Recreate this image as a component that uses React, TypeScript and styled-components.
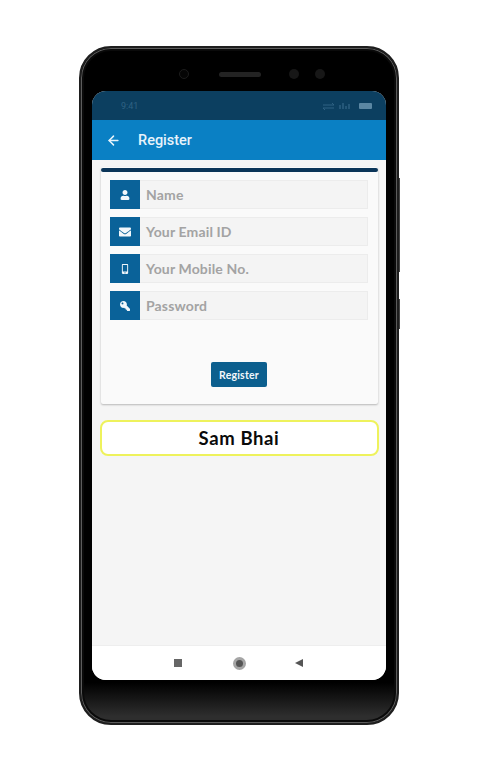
import React from "react";
import styled, { createGlobalStyle } from "styled-components";
import { ArrowLeft } from "lucide-react";
import { FaUser, FaEnvelope, FaMobileAlt, FaKey } from "react-icons/fa";

const GlobalStyle = createGlobalStyle`
  html, body {
    margin: 0;
    padding: 0;
    background: #ffffff;
    font-family: "Lato", "Liberation Sans", sans-serif;
  }
`;

const fields = [
  { label: "Name", icon: <FaUser size={10} /> },
  { label: "Your Email ID", icon: <FaEnvelope size={12} /> },
  { label: "Your Mobile No.", icon: <FaMobileAlt size={10} /> },
  { label: "Password", icon: <FlippedKey size={10} /> },
];

function FlippedKey({ size }: { size: number }) {
  return <FaKey size={size} style={{ transform: "scaleX(-1)" }} />;
}

export default function App() {
  return (
    <Page>
      <GlobalStyle />
      <Phone>
        <VolumeKey />
        <PowerKey />
        <Notch>
          <Camera />
          <Speaker />
          <Sensor />
          <Sensor $last />
        </Notch>
        <Screen>
          <StatusBar>
            <StatusText>9:41</StatusText>
            <StatusIcons>
              <svg width="49" height="8" viewBox="0 0 49 8">
                <path d="M0 3h11M11 3l-2-2M0 6h11M0 6l2 2" stroke="#2f6283" strokeWidth="1" fill="none" />
                <path d="M17 7V3M20 7V1M23 7V4M26 7V2" stroke="#2f6283" strokeWidth="1.4" />
                <rect x="36" y="1" width="13" height="6" rx="1" fill="#5b87a3" />
              </svg>
            </StatusIcons>
          </StatusBar>
          <AppBar>
            <ArrowLeft size={15} strokeWidth={2.4} color="#e6f3fb" />
            <Title>Register</Title>
          </AppBar>
          <Content>
            <Card>
              <CardAccent />
              <Fields>
                {fields.map((field) => (
                  <Field key={field.label}>
                    <IconBox>{field.icon}</IconBox>
                    <FieldLabel>{field.label}</FieldLabel>
                  </Field>
                ))}
              </Fields>
              <RegisterButton>Register</RegisterButton>
            </Card>
            <NameBox>Sam Bhai</NameBox>
          </Content>
          <NavBar>
            <NavSquare />
            <NavCircle />
            <NavBack />
          </NavBar>
        </Screen>
      </Phone>
    </Page>
  );
}

const Page = styled.div`
  width: 480px;
  height: 771px;
  box-sizing: border-box;
  padding: 46px 0 0 79px;
  overflow: hidden;
`;
const Phone = styled.div`
  position: relative;
  width: 320px;
  height: 679px;
  box-sizing: border-box;
  padding: 0 11px;
  background: linear-gradient(#000000 94%, #2e2e2e 99%);
  border: 2px solid #1e1e1e;
  border-radius: 32px;
  box-shadow: inset 0 0 0 1px #5c5c5c, inset 0 0 0 3px #0a0a0a;
`;
const VolumeKey = styled.div`
  position: absolute;
  top: 130px;
  right: -3px;
  width: 1px;
  height: 94px;
  background: #444444;
`;
const PowerKey = styled.div`
  position: absolute;
  top: 251px;
  right: -3px;
  width: 1px;
  height: 30px;
  background: #444444;
`;
const Notch = styled.div`
  display: flex;
  align-items: center;
  height: 43px;
  box-sizing: border-box;
  padding: 9px 0 0 87px;
`;
const Camera = styled.div`
  width: 10px;
  height: 10px;
  border-radius: 50%;
  background: #050505;
  border: 1px solid #1c1c1c;
  box-sizing: border-box;
  margin-right: 30px;
`;
const Speaker = styled.div`
  width: 42px;
  height: 5px;
  border-radius: 3px;
  background: #232323;
  margin-right: 28px;
`;
const Sensor = styled.div<{ $last?: boolean }>`
  width: 10px;
  height: 10px;
  border-radius: 50%;
  background: #171717;
  margin-right: ${(p) => (p.$last ? 0 : "16px")};
`;
const Screen = styled.div`
  display: flex;
  flex-direction: column;
  width: 294px;
  height: 589px;
  border-radius: 14px;
  overflow: hidden;
  background: #f5f5f5;
`;
const StatusBar = styled.div`
  display: flex;
  align-items: center;
  justify-content: space-between;
  height: 29px;
  flex-shrink: 0;
  box-sizing: border-box;
  padding: 0 14px 0 29px;
  background: #0c3f60;
`;
const StatusText = styled.span`
  color: #2f6283;
  font-size: 9px;
  font-family: "Roboto", sans-serif;
`;
const StatusIcons = styled.div`
  display: flex;
  align-items: center;
`;
const AppBar = styled.div`
  display: flex;
  align-items: center;
  height: 40px;
  flex-shrink: 0;
  box-sizing: border-box;
  padding: 0 0 0 14px;
  background: #0a80c4;
`;
const Title = styled.div`
  margin-left: 17px;
  color: #e6f3fb;
  font-family: "Roboto", sans-serif;
  font-size: 14.5px;
  font-weight: 500;
`;
const Content = styled.div`
  flex: 1;
  display: flex;
  flex-direction: column;
  align-items: center;
  padding-top: 7px;
  background: #f5f5f5;
`;
const Card = styled.div`
  display: flex;
  flex-direction: column;
  align-items: center;
  width: 277px;
  height: 237px;
  box-sizing: border-box;
  background: #fafafa;
  border-radius: 2px;
  box-shadow: 0 1px 2px rgba(0, 0, 0, 0.25);
`;
const CardAccent = styled.div`
  align-self: stretch;
  height: 4px;
  margin-top: 1px;
  border-radius: 2px;
  background: #0b3558;
`;
const Fields = styled.div`
  display: flex;
  flex-direction: column;
  gap: 8px;
  width: 258px;
  margin-top: 8px;
`;
const Field = styled.div`
  display: flex;
  align-items: stretch;
  height: 29px;
  background: #f4f4f4;
  box-shadow: 0 0 0 1px #ececec inset;
`;
const IconBox = styled.div`
  display: flex;
  align-items: center;
  justify-content: center;
  width: 30px;
  flex-shrink: 0;
  color: #f2f7fb;
  background: #0a6299;
`;
const FieldLabel = styled.div`
  display: flex;
  align-items: center;
  padding-left: 6px;
  color: #a3a3a3;
  font-size: 14px;
  font-weight: 700;
  letter-spacing: 0.15px;
`;
const RegisterButton = styled.div`
  display: flex;
  align-items: center;
  justify-content: center;
  width: 56px;
  height: 25px;
  margin-top: 42px;
  border-radius: 2px;
  color: #f2f7fb;
  background: #0c5f8e;
  font-size: 10.5px;
  font-weight: 700;
  letter-spacing: 0.2px;
`;
const NameBox = styled.div`
  display: flex;
  align-items: center;
  justify-content: center;
  width: 279px;
  height: 36px;
  box-sizing: border-box;
  margin-top: 16px;
  border: 2px solid #eef25c;
  border-radius: 8px;
  background: #ffffff;
  color: #0a0a0a;
  font-size: 18.5px;
  font-weight: 700;
  letter-spacing: 0.6px;
`;
const NavBar = styled.div`
  display: flex;
  align-items: center;
  height: 35px;
  flex-shrink: 0;
  box-sizing: border-box;
  padding: 0 0 0 82px;
  background: #ffffff;
  border-top: 1px solid #eeeeee;
`;
const NavSquare = styled.div`
  width: 8px;
  height: 8px;
  background: #666666;
`;
const NavCircle = styled.div`
  width: 13px;
  height: 13px;
  margin-left: 51px;
  box-sizing: border-box;
  border: 3px solid #a5a5a5;
  border-radius: 50%;
  background: #555555;
`;
const NavBack = styled.div`
  width: 0;
  height: 0;
  margin-left: 49px;
  border-top: 4.5px solid transparent;
  border-bottom: 4.5px solid transparent;
  border-right: 8px solid #555555;
`;
